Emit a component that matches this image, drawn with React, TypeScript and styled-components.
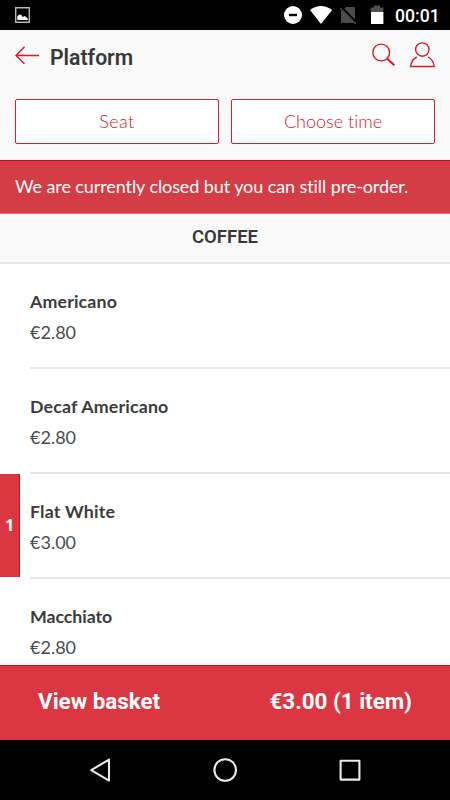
import React from "react";
import styled, { createGlobalStyle } from "styled-components";

const GlobalStyle = createGlobalStyle`
  * { box-sizing: border-box; }
  body { margin: 0; background: #fff; }
  button { font: inherit; padding: 0; border: 0; background: none; }
  svg { display: block; flex: none; }
`;

const Screen = styled.div`
  width: 450px;
  height: 800px;
  display: flex;
  flex-direction: column;
  overflow: hidden;
  background: #fff;
  color: #333;
  font-family: Lato, sans-serif;
  font-variant-ligatures: none;
`;

const StatusBar = styled.div`
  flex: none;
  height: 30px;
  display: flex;
  align-items: center;
  padding: 0 11px 0 15px;
  background: #000;
  color: #fff;
`;

const StatusIcons = styled.div`
  margin-left: auto;
  display: flex;
`;

const Clock = styled.span`
  width: 44px;
  margin-left: 11px;
  font: 500 17.6px/30px Roboto, sans-serif;
  padding-top: 1px;
  height: 30px;
  white-space: nowrap;
`;

const Header = styled.header`
  flex: none;
  height: 130px;
  background: #f9f9f9;
`;

const TitleRow = styled.div`
  height: 69px;
  display: flex;
  align-items: flex-start;
  padding: 10px 15px 0;
`;

const Title = styled.h1`
  margin: 5px auto 0 11px;
  font: 600 21.2px/26px Roboto, sans-serif;
  color: #383838;
`;

const HeaderActions = styled.div`
  display: flex;
  gap: 13px;
`;

const Options = styled.div`
  display: grid;
  grid-template-columns: 1fr 1fr;
  gap: 12px;
  padding: 0 15px;
`;

const OptionButton = styled.button<{ $tracking: number }>`
  && {
    height: 45px;
    border: 1px solid #d8202c;
    border-radius: 2px;
    background: #fff;
    color: #d01c2a;
    font-size: 18px;
    font-weight: 300;
    line-height: 42px;
    padding-bottom: 1px;
    letter-spacing: ${(p) => p.$tracking}px;
  }
`;

const Notice = styled.div`
  flex: none;
  height: 54px;
  padding-left: 15px;
  border-top: 1px solid #cc0c14;
  border-bottom: 1px solid #e2757b;
  background: #d43d45;
  color: #fff;
  font-size: 18px;
  line-height: 51px;
  white-space: nowrap;
  letter-spacing: -0.09px;
`;

const SectionTitle = styled.h2`
  flex: none;
  height: 50px;
  margin: 0;
  border-bottom: 2px solid #e6e6e6;
  background: #f9f9f9;
  text-align: center;
  font: 600 18.5px/47px Roboto, sans-serif;
  color: #383838;
`;

const Menu = styled.ul`
  flex: 1;
  min-height: 0;
  margin: 0;
  padding: 0;
  overflow: hidden;
  list-style: none;
`;

const MenuItem = styled.li`
  height: 105px;
  display: flex;
`;

const Quantity = styled.div<{ $active: boolean }>`
  width: 20px;
  height: 103px;
  margin-right: 10px;
  background: ${(p) => (p.$active ? "#db3742" : "transparent")};
  border-right: 1px solid ${(p) => (p.$active ? "#cc0c18" : "transparent")};
  color: #fff;
  font: 700 16px/103px "Open Sans", sans-serif;
  text-align: center;
`;

const ItemBody = styled.div`
  flex: 1;
  padding-top: 23px;
  border-bottom: 2px solid #e6e6e6;
`;

const ItemName = styled.div<{ $tracking: number }>`
  font-size: 17.8px;
  font-weight: 700;
  line-height: 28px;
  letter-spacing: ${(p) => p.$tracking}px;
  color: #3c3c3c;
`;

const ItemPrice = styled.div`
  margin-top: 3px;
  font-size: 18px;
  line-height: 28px;
  color: #4c4c4c;
`;

const Basket = styled.button`
  && {
    flex: none;
    height: 75px;
    display: flex;
    justify-content: space-between;
    padding: 0 38px;
    border-top: 1px solid #d00a10;
    background: #db3742;
    color: #fff;
    font: 700 22.4px/71px Roboto, sans-serif;
    white-space: nowrap;
  }
`;

const NavBar = styled.nav`
  flex: none;
  height: 60px;
  display: flex;
  align-items: center;
  justify-content: center;
  background: #000;
`;

const items = [
  { name: "Americano", price: "€2.80", quantity: 0, tracking: 0.15 },
  { name: "Decaf Americano", price: "€2.80", quantity: 0, tracking: 0.18 },
  { name: "Flat White", price: "€3.00", quantity: 1, tracking: 0.2 },
  { name: "Macchiato", price: "€2.80", quantity: 0, tracking: -0.08 },
];

const PictureIcon = () => (
  <svg width="15" height="16" viewBox="0 0 15 16">
    <path d="M.7.7h13.6v14.6H.7z" fill="none" stroke="#b5b5b5" strokeWidth="1.4" />
    <path d="M2.300 13V9.200l2-1.600 2 .5 1.400 1.800 2-.8 1.400.8 1.600 1.400V13z" fill="#fff" />
  </svg>
);

const SystemIcons = () => (
  <svg width="100" height="30" viewBox="284 0 100 30">
    <circle cx="293" cy="15" r="9" fill="#fff" />
    <path d="M289 15h8" stroke="#000" strokeWidth="2.4" />
    <path d="M310 10Q321 2 332.200 10L321 24z" fill="#fff" />
    <path d="M346 7h9v16h-14V12z" fill="#4b4b4b" />
    <path d="M341.500 7.200L357 23" stroke="#000" strokeWidth="2" />
    <path d="M340 8L355.700 24" stroke="#4b4b4b" strokeWidth="1.500" />
    <path d="M374 5.500h6v2h3.300v6h-12.600v-6h3.300z" fill="#505050" />
    <path d="M371 12h12.400v12H371z" fill="#fff" />
  </svg>
);

const BackIcon = () => (
  <svg width="24" height="32" viewBox="0 0 24 32">
    <path d="M9.500 6.800L1 15.500l8.500 8.200M1 15.500h23" fill="none" stroke="#d91c29" strokeWidth="1.500" />
  </svg>
);

const SearchIcon = () => (
  <svg width="26" height="32" viewBox="370 40 26 32">
    <circle cx="381.200" cy="52.500" r="8.400" fill="none" stroke="#d91c29" strokeWidth="1.400" />
    <path d="M387 58.500l7.300 6.700" stroke="#d91c29" strokeWidth="2.200" />
  </svg>
);

const ProfileIcon = () => (
  <svg width="26" height="32" viewBox="409 40 26 32">
    <g fill="none" stroke="#d91c29" strokeWidth="1.400">
      <circle cx="422.300" cy="49.600" r="6.700" />
      <path d="M416.800 57C412.800 59 411 62.500 410.600 66.500H434.200C433.800 62.500 431.800 59 428 57" />
    </g>
  </svg>
);

const NavIcons = () => (
  <svg width="272" height="30" viewBox="89 755 272 30">
    <g fill="none" stroke="#e9e9e9" strokeWidth="2.100" strokeLinejoin="round">
      <path d="M91.200 770.200L109 759.600V780.600z" />
      <circle cx="225.200" cy="770" r="10.800" />
      <rect x="340.600" y="760.800" width="18.800" height="18.800" />
    </g>
  </svg>
);

export default function App() {
  return (
    <Screen>
      <GlobalStyle />
      <StatusBar>
        <PictureIcon />
        <StatusIcons>
          <SystemIcons />
        </StatusIcons>
        <Clock>00:01</Clock>
      </StatusBar>
      <Header>
        <TitleRow>
          <BackIcon />
          <Title>Platform</Title>
          <HeaderActions>
            <SearchIcon />
            <ProfileIcon />
          </HeaderActions>
        </TitleRow>
        <Options>
          <OptionButton $tracking={0.4}>Seat</OptionButton>
          <OptionButton $tracking={0}>Choose time</OptionButton>
        </Options>
      </Header>
      <Notice>We are currently closed but you can still pre-order.</Notice>
      <SectionTitle>COFFEE</SectionTitle>
      <Menu>
        {items.map((item) => (
          <MenuItem key={item.name}>
            <Quantity $active={item.quantity > 0}>{item.quantity || ""}</Quantity>
            <ItemBody>
              <ItemName $tracking={item.tracking}>{item.name}</ItemName>
              <ItemPrice>{item.price}</ItemPrice>
            </ItemBody>
          </MenuItem>
        ))}
      </Menu>
      <Basket>
        <span>View basket</span>
        <span>€3.00 (1 item)</span>
      </Basket>
      <NavBar>
        <NavIcons />
      </NavBar>
    </Screen>
  );
}
